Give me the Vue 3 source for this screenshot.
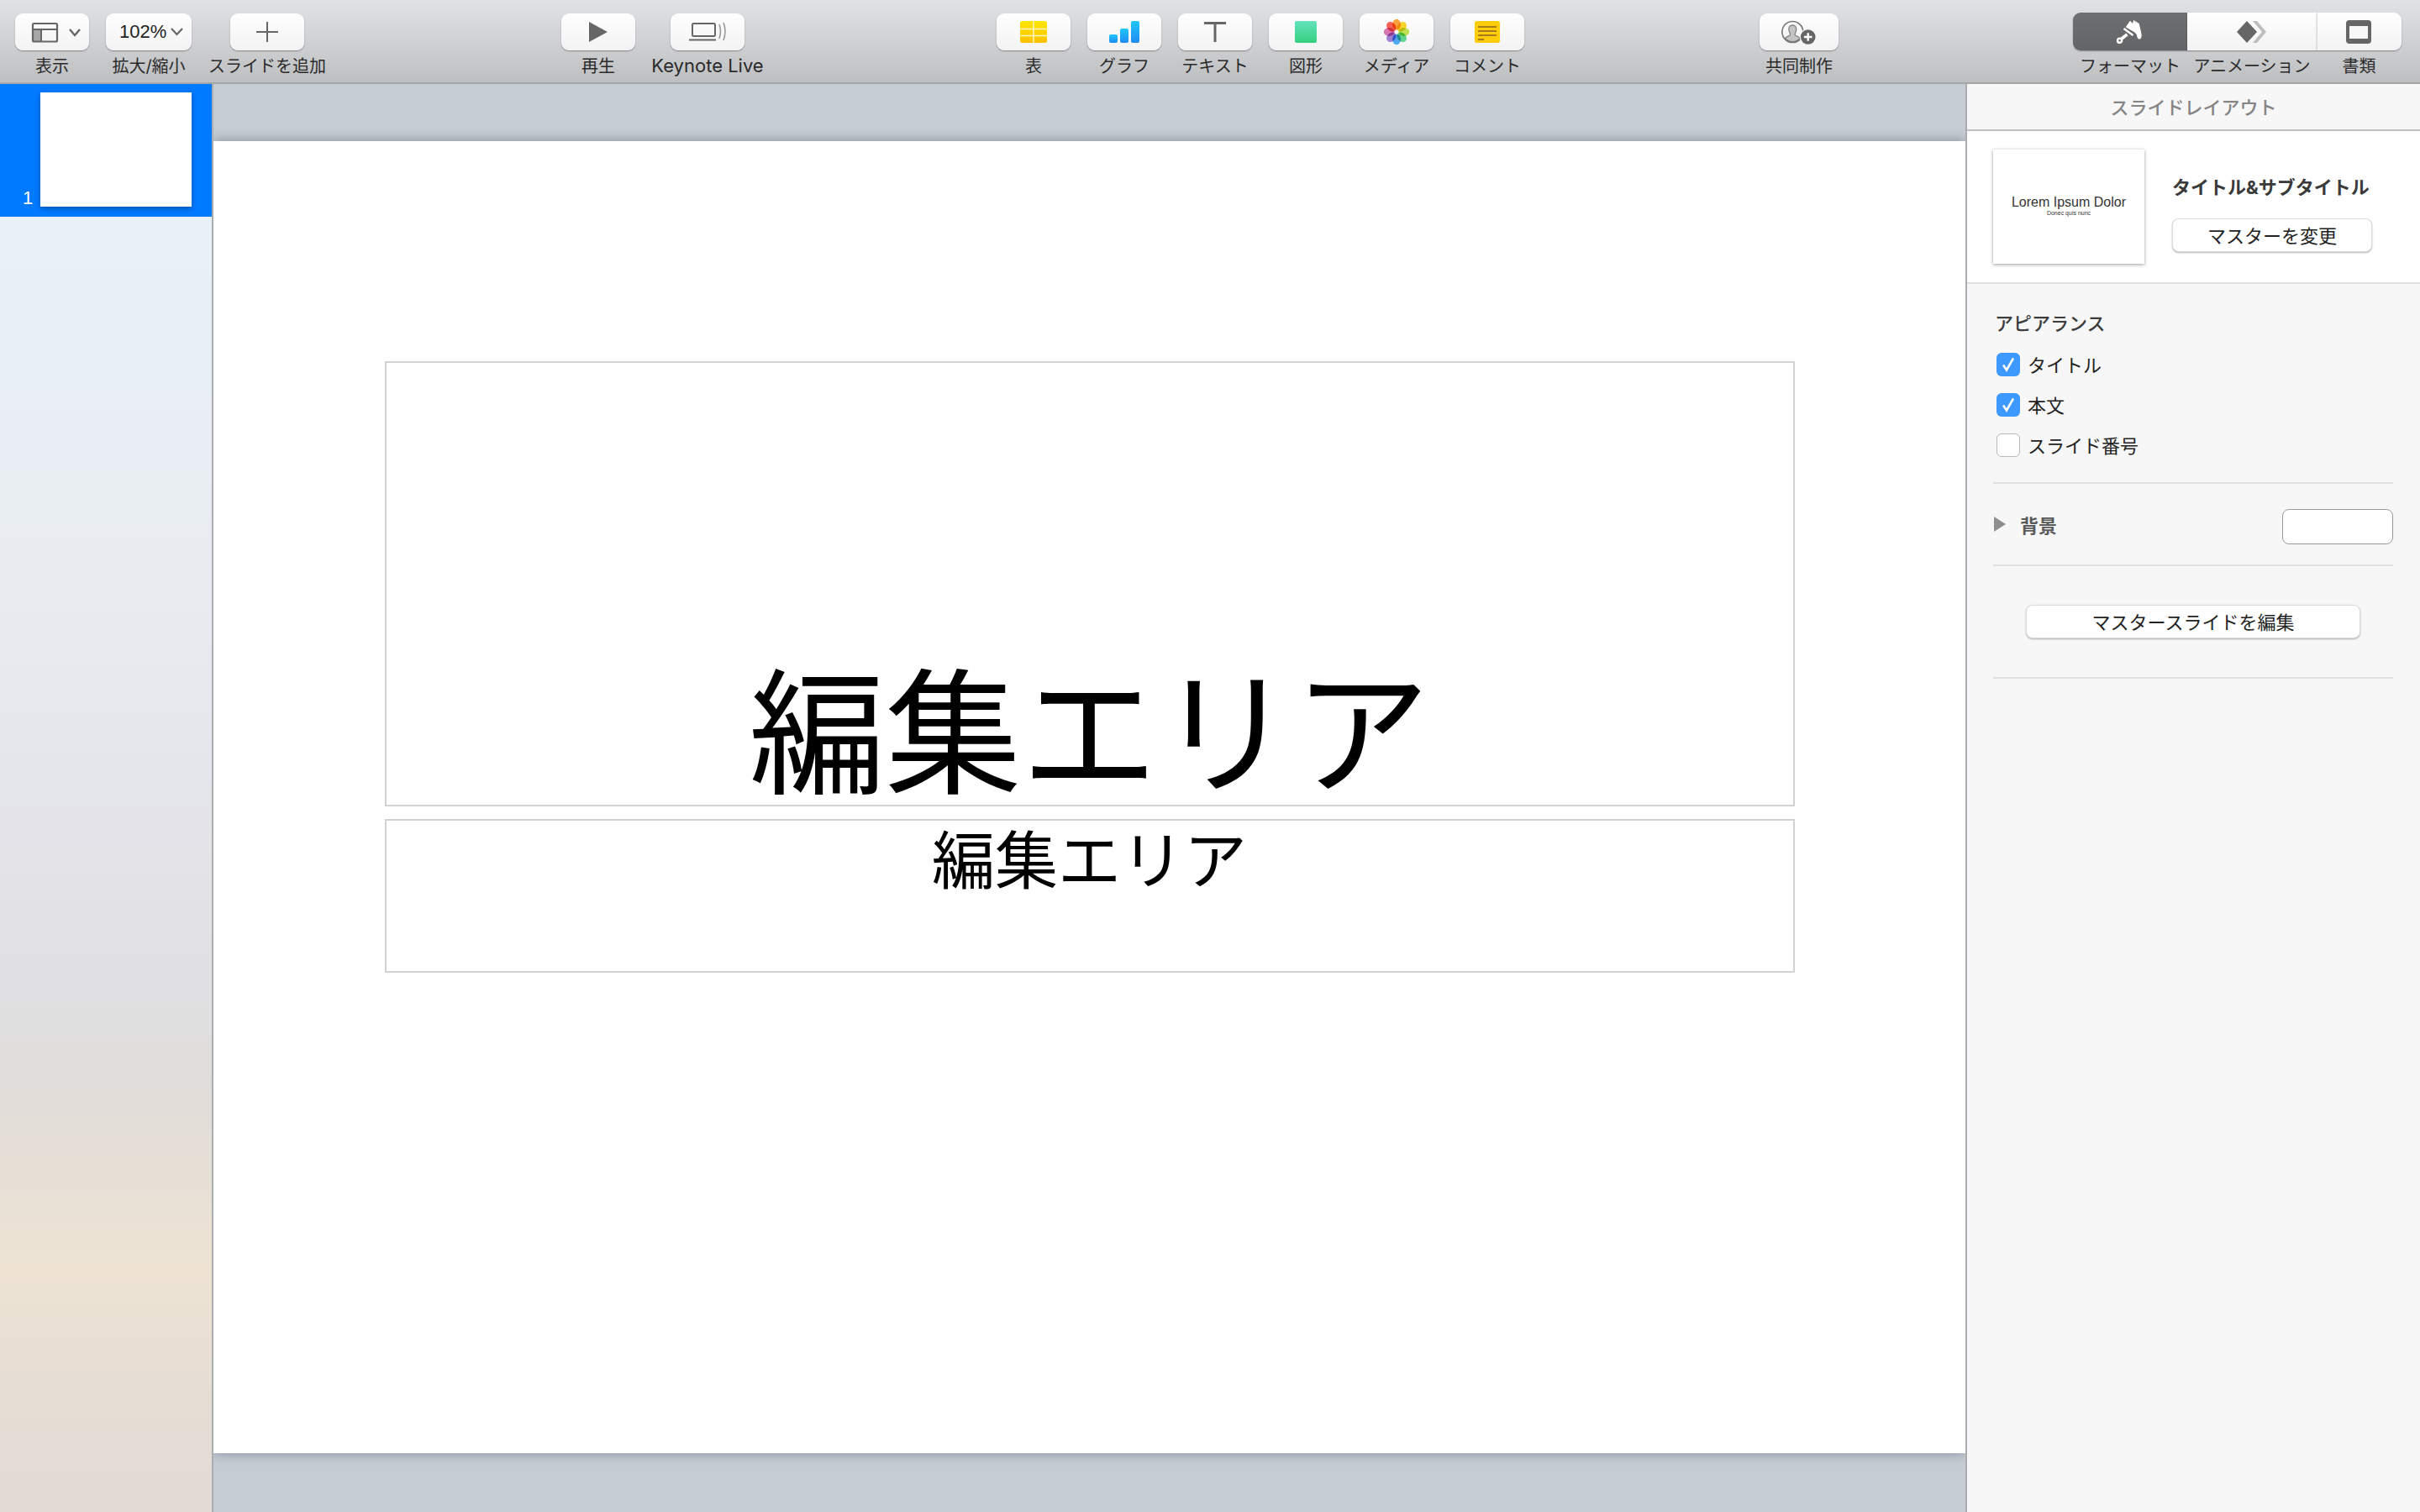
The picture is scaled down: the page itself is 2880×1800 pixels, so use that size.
<template>
  <div class="app">
    <div class="toolbar">
      <div class="tool">
        <div class="btn">
          <svg width="88" height="30" viewBox="0 0 88 30">
            <path d="M21 12h10v14H21z" fill="#a8a8a8"/>
            <rect x="21" y="5" width="29" height="21.500" rx="1.500" fill="none" stroke="#666" stroke-width="2.200"/>
            <path d="M21 12h29M31 12v14" stroke="#666" stroke-width="2" fill="none"/>
            <path d="M65 12l6 7 6-7" stroke="#666" stroke-width="2.400" fill="none"/>
          </svg>
        </div>
        <span>表示</span>
      </div>
      <div class="tool tool-zoom">
        <div class="btn zoom-btn">
          <b>102%</b>
          <svg width="15" height="10" viewBox="0 0 15 10"><path d="M1 1l6.500 7L14 1" stroke="#666" stroke-width="2.200" fill="none"/></svg>
        </div>
        <span>拡大/縮小</span>
      </div>
      <div class="tool tool-add">
        <div class="btn">
          <svg width="26" height="24" viewBox="0 0 26 24"><path d="M13 0v24M0 12h26" stroke="#666" stroke-width="2"/></svg>
        </div>
        <span>スライドを追加</span>
      </div>
      <div class="tool tool-play">
        <div class="btn">
          <svg width="22" height="24" viewBox="0 0 22 24"><path d="M0 0l22 12L0 24z" fill="#666"/></svg>
        </div>
        <span>再生</span>
      </div>
      <div class="tool tool-live">
        <div class="btn">
          <svg width="48" height="22" viewBox="0 0 48 22">
            <rect x="6" y="1" width="27" height="15" rx="1.500" fill="none" stroke="#666" stroke-width="2"/>
            <path d="M2 20.500h32" stroke="#666" stroke-width="2"/>
            <path d="M38 2q3 8 0 17M43 0q4 10 0 21" stroke="#999" stroke-width="1.600" fill="none"/>
          </svg>
        </div>
        <span class="live-label">Keynote Live</span>
      </div>

      <div class="tool">
        <div class="btn">
          <svg width="32" height="26" viewBox="0 0 32 26">
            <defs><linearGradient id="tb" x1="0" y1="0" x2="0" y2="1"><stop offset="0" stop-color="#ffe600"/><stop offset="1" stop-color="#ffc000"/></linearGradient></defs>
            <rect width="32" height="26" rx="2.500" fill="url(#tb)"/>
            <path d="M16 0v26M0 9.500h32M0 17.500h32" stroke="#fff6c8" stroke-width="1.500"/>
          </svg>
        </div>
        <span>表</span>
      </div>
      <div class="tool">
        <div class="btn">
          <svg width="36" height="26" viewBox="0 0 36 26">
            <defs><linearGradient id="ch" x1="0" y1="0" x2="0" y2="1"><stop offset="0" stop-color="#20c6fb"/><stop offset="1" stop-color="#1f8bf0"/></linearGradient></defs>
            <rect x="0" y="16" width="10" height="10" rx="2" fill="url(#ch)"/>
            <rect x="13" y="9" width="10" height="17" rx="2" fill="url(#ch)"/>
            <rect x="26" y="0" width="10" height="26" rx="2" fill="url(#ch)"/>
          </svg>
        </div>
        <span>グラフ</span>
      </div>
      <div class="tool">
        <div class="btn">
          <svg width="26" height="24" viewBox="0 0 26 24"><path d="M0 1.500h26M13 1.500V24" stroke="#666" stroke-width="3"/></svg>
        </div>
        <span>テキスト</span>
      </div>
      <div class="tool">
        <div class="btn">
          <svg width="26" height="26" viewBox="0 0 26 26">
            <defs><linearGradient id="sh" x1="0" y1="0" x2="0" y2="1"><stop offset="0" stop-color="#63e3be"/><stop offset="1" stop-color="#35d07e"/></linearGradient></defs>
            <rect width="26" height="26" rx="2" fill="url(#sh)"/>
          </svg>
        </div>
        <span>図形</span>
      </div>
      <div class="tool">
        <div class="btn">
          <svg width="32" height="32" viewBox="-16 -16 32 32" class="photos">
            <ellipse v-for="p in petals" :key="p.deg" class="petal" cx="0" cy="-8.800" rx="5" ry="6.400" :fill="p.color" :transform="`rotate(${p.deg})`"/>
            <circle r="1.200" fill="#fff"/>
          </svg>
        </div>
        <span>メディア</span>
      </div>
      <div class="tool">
        <div class="btn">
          <svg width="30" height="26" viewBox="0 0 30 26">
            <rect width="30" height="26" rx="2.500" fill="#ffcc0a"/>
            <path d="M4 7h22M4 12h22M4 17h22M4 22h7" stroke="#a67c1a" stroke-width="2"/>
          </svg>
        </div>
        <span>コメント</span>
      </div>

      <div class="tool tool-collab">
        <div class="btn">
          <svg width="42" height="30" viewBox="0 0 42 30">
            <path d="M13.300 7c-3.500 0-4.800 2.800-4.400 5.700.3 2 1.200 3.300 1.600 4.800.3 1.300-.8 2-2.500 2.700-1.500.6-2.800 1.300-3.500 2.500a12 12 0 0 0 17.600 0c-.7-1.200-2-1.900-3.500-2.500-1.700-.7-2.800-1.400-2.500-2.700.4-1.500 1.300-2.800 1.600-4.800C18.100 9.800 16.800 7 13.300 7z" fill="#c4c4c4" stroke="#808080" stroke-width="1.300"/>
            <circle cx="13.300" cy="15" r="12.500" fill="none" stroke="#777" stroke-width="1.700"/>
            <circle cx="31.700" cy="21" r="10" fill="#f7f7f7"/>
            <circle cx="31.700" cy="21" r="8.800" fill="#666"/>
            <path d="M31.700 16.200v9.600M26.900 21h9.600" stroke="#fff" stroke-width="2.400"/>
          </svg>
        </div>
        <span>共同制作</span>
      </div>

      <div class="seg">
        <div class="seg-item seg-format">
          <div class="seg-btn active">
            <svg width="32" height="30" viewBox="0 0 32 30">
              <path d="M10.700 9.300L16 1.700l3 3.300 1-4 6.700 4 2.300 10c.8 3 1.200 8-1.500 8.500-2.500.5-3.500-3-3.500-5l-2.500-3z" fill="#fff"/>
              <path d="M8.500 11l11 8" stroke="#fff" stroke-width="2.400"/>
              <path d="M12.500 18l-6.500 5" stroke="#fff" stroke-width="3.600"/>
              <circle cx="3.600" cy="25.300" r="2.500" fill="none" stroke="#fff" stroke-width="2.400"/>
            </svg>
          </div>
          <span>フォーマット</span>
        </div>
        <div class="seg-item seg-anim">
          <div class="seg-btn">
            <svg width="36" height="26" viewBox="0 0 36 26">
              <path d="M24 0l11 13-11 13h-5l11-13L19 0z" fill="#bdbdbd"/>
              <path d="M12 0l12 13-12 13L0 13z" fill="#666"/>
            </svg>
          </div>
          <span>アニメーション</span>
        </div>
        <div class="seg-item seg-doc">
          <div class="seg-btn">
            <svg width="30" height="28" viewBox="0 0 30 28" class="doc-icon">
              <rect width="30" height="28" rx="4" fill="#666"/>
              <rect x="4" y="7" width="22" height="15" fill="#f8f8f8"/>
            </svg>
          </div>
          <span>書類</span>
        </div>
      </div>
    </div>

    <div class="main">
      <aside class="navigator">
        <div class="nav-item">
          <span class="nav-num">1</span>
          <div class="nav-thumb"></div>
        </div>
      </aside>

      <div class="canvas">
        <div class="slide">
          <div class="placeholder ph-title">編集エリア</div>
          <div class="placeholder ph-sub">編集エリア</div>
        </div>
      </div>

      <aside class="inspector">
        <div class="insp-head">スライドレイアウト</div>
        <div class="insp-master">
          <div class="master-thumb">
            <div class="mt-title">Lorem Ipsum Dolor</div>
            <div class="mt-sub">Donec quis nunc</div>
          </div>
          <div class="master-info">
            <div class="master-name">タイトル&amp;サブタイトル</div>
            <div class="push master-btn">マスターを変更</div>
          </div>
        </div>

        <div class="insp-body">
          <div class="insp-label">アピアランス</div>
          <div class="check-list">
            <div class="check-row" v-for="c in checks" :key="c.label">
              <div class="check" :class="{ on: c.on }">
                <svg v-if="c.on" width="18" height="18" viewBox="0 0 18 18"><path d="M3 9.500l4 6L15 1.500" stroke="#fff" stroke-width="2.600" fill="none"/></svg>
              </div>
              <span>{{ c.label }}</span>
            </div>
          </div>
          <div class="rule rule-check"></div>
          <div class="bg-row">
            <svg width="14" height="18" viewBox="0 0 14 18"><path d="M0 0l14 9L0 18z" fill="#8e8e8e"/></svg>
            <span class="bg-label">背景</span>
            <div class="swatch"></div>
          </div>
          <div class="rule"></div>
          <div class="push edit-btn">マスタースライドを編集</div>
          <div class="rule"></div>
        </div>
      </aside>
    </div>
  </div>
</template>

<script setup>
const petals = [
  { deg: 0, color: '#f9a13a' },
  { deg: 45, color: '#f7d52c' },
  { deg: 90, color: '#bfe050' },
  { deg: 135, color: '#62d28f' },
  { deg: 180, color: '#4ea8f2' },
  { deg: 225, color: '#a27fd2' },
  { deg: 270, color: '#d975b0' },
  { deg: 315, color: '#f4605a' }
]

const checks = [
  { label: 'タイトル', on: true },
  { label: '本文', on: true },
  { label: 'スライド番号', on: false }
]
</script>

<style>
html, body { margin: 0; background: #fff; }
</style>

<style scoped>
.app {
  width: 2880px;
  height: 1800px;
  display: flex;
  flex-direction: column;
  overflow: hidden;
  font-family: Inter, "Noto Sans CJK JP", sans-serif;
  color: #222;
}
.toolbar {
  height: 82px;
  flex: none;
  display: flex;
  align-items: flex-start;
  padding-top: 16px;
  padding-left: 18px;
  background: linear-gradient(#e0e3e6, #bebfc1);
  border-bottom: 2px solid #a4a6a8;
}
.tool {
  width: 88px;
  display: flex;
  flex-direction: column;
  align-items: center;
  margin-right: 20px;
  flex: none;
}
.tool span, .seg-item span {
  font-size: 20px;
  line-height: 24px;
  margin-top: 7px;
  white-space: nowrap;
  color: #2a2a2a;
}
.tool .live-label { font-size: 22px; margin-top: 6px; }
.btn {
  width: 100%;
  height: 44px;
  box-sizing: border-box;
  display: flex;
  align-items: center;
  justify-content: center;
  background: linear-gradient(#fefefe, #f3f3f3);
  border-radius: 9px;
  box-shadow: 0 1px 1.500px rgba(0, 0, 0, 0.35);
}
.tool-zoom { width: 102px; margin-right: 46px; }
.zoom-btn { gap: 5px; justify-content: flex-start; padding-left: 16px; }
.zoom-btn b {
  font-family: "Liberation Sans", sans-serif;
  font-weight: 400;
  font-size: 22px;
  color: #222;
}
.tool-add { margin-right: 306px; }
.tool-play { margin-right: 42px; }
.tool-live { margin-right: 300px; }
.tool-collab { width: 94px; margin-left: 260px; margin-right: 279px; }
.photos { isolation: isolate; }
.petal { mix-blend-mode: multiply; }
.seg {
  display: flex;
  width: 391px;
  flex: none;
  margin-top: -1px;
}
.seg-item {
  display: flex;
  flex-direction: column;
  align-items: center;
}
.seg-btn {
  width: 100%;
  height: 45px;
  box-sizing: border-box;
  display: flex;
  align-items: center;
  justify-content: center;
  background: linear-gradient(#fefefe, #f3f3f3);
  box-shadow: 0 1px 1.500px rgba(0, 0, 0, 0.35);
}
.seg-btn.active { background: linear-gradient(#6e6f71, #636466); }
.seg-format { width: 136px; }
.seg-format .seg-btn { border-radius: 9px 0 0 9px; }
.seg-anim { width: 154px; }
.seg-doc { width: 101px; }
.seg-doc .seg-btn { border-radius: 0 9px 9px 0; border-left: 1px solid #dcdcdc; }
.doc-icon { margin-right: 3px; }

.main {
  flex: 1;
  min-height: 0;
  display: flex;
}
.navigator {
  width: 252px;
  flex: none;
  border-right: 2px solid #a9adb2;
  background: linear-gradient(#e8f0f8 12%, #e9edf2 32%, #e3e3e8 55%, #e0e0e2 64%, #e0dcd9 70%, #eee3d3 83%, #e6ddd4 91%, #e3dad6 100%);
}
.nav-item {
  height: 158px;
  box-sizing: border-box;
  padding: 10px 24px 12px 27px;
  background: #007aff;
  display: flex;
  align-items: flex-end;
}
.nav-num {
  width: 21px;
  font-family: "Liberation Sans", sans-serif;
  font-size: 22px;
  line-height: 20px;
  color: #fff;
}
.nav-thumb {
  width: 180px;
  height: 136px;
  background: #fff;
  box-shadow: 0 2px 6px rgba(0, 0, 0, 0.35);
}
.canvas {
  flex: 1;
  min-width: 0;
  background: #c5ccd4;
  padding-top: 68px;
  overflow: hidden;
}
.slide {
  height: 1562px;
  box-sizing: border-box;
  padding-top: 262px;
  background: #fff;
  box-shadow: 0 0 14px rgba(0, 0, 0, 0.32);
  display: flex;
  flex-direction: column;
  align-items: center;
  font-family: "Noto Sans CJK JP", sans-serif;
  color: #000;
}
.placeholder {
  width: 1678px;
  box-sizing: border-box;
  border: 2px solid #d2d2d2;
  display: flex;
  justify-content: center;
  white-space: nowrap;
}
.ph-title {
  height: 530px;
  align-items: flex-end;
  font-size: 162px;
  line-height: 190px;
  margin-bottom: 15px;
}
.ph-sub {
  height: 183px;
  align-items: flex-start;
  font-size: 75px;
  line-height: 85px;
}

.inspector {
  width: 541px;
  flex: none;
  box-sizing: border-box;
  border-left: 2px solid #a9adb2;
  background: #f7f7f7;
  position: relative;
}
.insp-head {
  height: 54px;
  padding-bottom: 2px;
  box-sizing: border-box;
  height: 56px;
  border-bottom: 2px solid #bfc0c1;
  display: flex;
  align-items: center;
  justify-content: center;
  font-size: 22px;
  font-weight: 500;
  color: #858585;
}
.insp-master {
  height: 180px;
  background: #fff;
  border-bottom: 2px solid #e0e0e0;
  display: flex;
  align-items: center;
  padding-left: 31px;
  gap: 33px;
}
.master-thumb {
  width: 180px;
  height: 136px;
  padding-bottom: 2px;
  box-sizing: border-box;
  background: #fff;
  box-shadow: 0 1px 4px rgba(0, 0, 0, 0.4);
  display: flex;
  flex-direction: column;
  align-items: center;
  justify-content: center;
  font-family: "Liberation Sans", sans-serif;
  color: #333;
}
.mt-title { font-size: 16px; line-height: 17px; }
.mt-sub { font-size: 7px; line-height: 9px; }
.master-info { padding-top: 15px; }
.master-name {
  font-size: 22px;
  font-weight: 700;
  line-height: 30px;
  color: #3a3a3a;
  white-space: nowrap;
  margin-bottom: 22px;
}
.push {
  display: flex;
  align-items: center;
  justify-content: center;
  background: #fff;
  border: 1px solid #dcdcdc;
  border-radius: 8px;
  box-shadow: 0 1px 2px rgba(0, 0, 0, 0.3);
  box-sizing: border-box;
  font-size: 22px;
  color: #222;
  padding-bottom: 2px;
}
.master-btn { width: 238px; height: 40px; }
.insp-body { padding: 32px 32px 0 31px; }
.insp-label {
  font-size: 22px;
  font-weight: 500;
  line-height: 30px;
  color: #3c3c3c;
  padding-left: 2px;
  margin-bottom: 20px;
}
.check-list {
  display: flex;
  flex-direction: column;
  gap: 20px;
  padding-left: 4px;
}
.check-row {
  display: flex;
  align-items: center;
  gap: 9px;
  height: 28px;
  font-size: 22px;
  color: #222;
}
.check-row span { padding-bottom: 3px; }
.check {
  width: 28px;
  height: 28px;
  box-sizing: border-box;
  border-radius: 6px;
  background: #fff;
  border: 1px solid #b8b8b8;
  display: flex;
  align-items: center;
  justify-content: center;
}
.check.on { background: #3d98ff; border: none; }
.rule { height: 2px; background: #e0e0e0; }
.rule-check { margin-top: 30px; }
.bg-row {
  height: 96px;
  display: flex;
  align-items: center;
  padding-left: 1px;
}
.bg-label {
  font-size: 22px;
  font-weight: 700;
  color: #5a5a5a;
  margin-left: 17px;
}
.swatch {
  width: 132px;
  height: 42px;
  box-sizing: border-box;
  margin-left: auto;
  margin-top: 6px;
  background: #fff;
  border: 1px solid #9a9a9a;
  border-radius: 8px;
}
.edit-btn {
  width: 398px;
  height: 40px;
  margin: 46px 0 46px 39px;
}
</style>
